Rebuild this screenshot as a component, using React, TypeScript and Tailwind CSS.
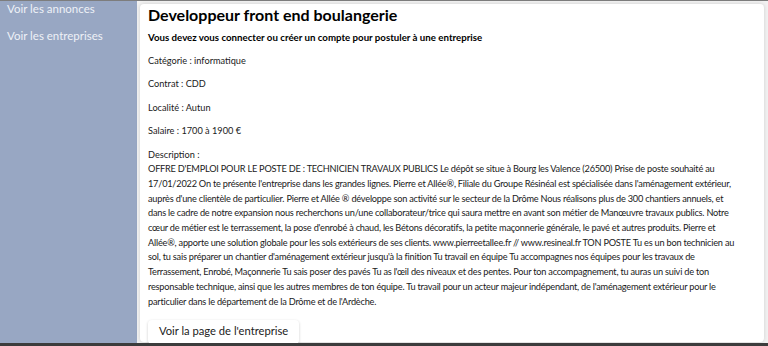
// Lines of the description as they break in the original page.
const descriptionLines = [
  "OFFRE D'EMPLOI POUR LE POSTE DE : TECHNICIEN TRAVAUX PUBLICS Le dépôt se situe à Bourg les Valence (26500) Prise de poste souhaité au",
  "17/01/2022 On te présente l'entreprise dans les grandes lignes. Pierre et Allée®, Filiale du Groupe Résinéal est spécialisée dans l'aménagement extérieur,",
  "auprès d'une clientèle de particulier. Pierre et Allée ® développe son activité sur le secteur de la Drôme Nous réalisons plus de 300 chantiers annuels, et",
  "dans le cadre de notre expansion nous recherchons un/une collaborateur/trice qui saura mettre en avant son métier de Manœuvre travaux publics. Notre",
  "cœur de métier est le terrassement, la pose d'enrobé à chaud, les Bétons décoratifs, la petite maçonnerie générale, le pavé et autres produits. Pierre et",
  "Allée®, apporte une solution globale pour les sols extérieurs de ses clients. www.pierreetallee.fr // www.resineal.fr TON POSTE Tu es un bon technicien au",
  "sol, tu sais préparer un chantier d'aménagement extérieur jusqu'à la finition Tu travail en équipe Tu accompagnes nos équipes pour les travaux de",
  "Terrassement, Enrobé, Maçonnerie Tu sais poser des pavés Tu as l'œil des niveaux et des pentes. Pour ton accompagnement, tu auras un suivi de ton",
  "responsable technique, ainsi que les autres membres de ton équipe. Tu travail pour un acteur majeur indépendant, de l'aménagement extérieur pour le",
  "particulier dans le département de la Drôme et de l'Ardèche.",
];

const details = [
  { label: "Catégorie", value: "informatique" },
  { label: "Contrat", value: "CDD" },
  { label: "Localité", value: "Autun" },
  { label: "Salaire", value: "1700 à 1900 €" },
];

function Sidebar() {
  return (
    <nav className="flex w-[137px] shrink-0 flex-col gap-[12px] bg-[#98a7c3] pl-[7px] text-[11.5px] leading-[15px] text-[#eef1f7]">
      <a href="#">Voir les annonces</a>
      <a href="#">Voir les entreprises</a>
    </nav>
  );
}

function OfferCard() {
  return (
    <article className="flex h-full flex-col rounded-[4px] bg-white pl-[8px] pr-[1px] shadow-[0_0_4px_rgba(0,0,0,0.15)]">
      <h2 className="text-[16px] font-bold leading-[22px] text-black">Developpeur front end boulangerie</h2>
      <p className="mt-[4px] text-[9.7px] font-bold leading-[14.7px] text-black">
        Vous devez vous connecter ou créer un compte pour postuler à une entreprise
      </p>
      {details.map((item) => (
        <p key={item.label} className="mt-[8.8px] text-[9.2px] leading-[14.7px] text-[#1a1a1a]">
          {item.label} : {item.value}
        </p>
      ))}
      <div className="mt-[8.8px] text-[9.2px] leading-[14.7px] text-[#1a1a1a]">
        <p>Description :</p>
        {descriptionLines.map((line) => (
          <span key={line} className="block whitespace-nowrap tracking-[-0.22px]">
            {line}
          </span>
        ))}
      </div>
      <div className="mt-[8px]">
        <button className="h-[24px] rounded-[4px] bg-white px-[11px] text-[11.2px] text-[#222] shadow-[0_1px_3px_rgba(0,0,0,0.2)]">
          Voir la page de l'entreprise
        </button>
      </div>
    </article>
  );
}

export default function App() {
  return (
    <div className="flex h-[346px] flex-col overflow-hidden bg-[#3c3c3c] font-['Lato',sans-serif]">
      <div className="h-px bg-[#7d7d7d]" />
      <div className="flex min-h-0 flex-1">
        <Sidebar />
        <main className="flex-1 bg-[#f2f2f2] pb-[1px] pl-[3px] pr-[4px] pt-[3px]">
          <OfferCard />
        </main>
      </div>
      <div className="h-[3px] bg-[#3c3c3c]" />
    </div>
  );
}
